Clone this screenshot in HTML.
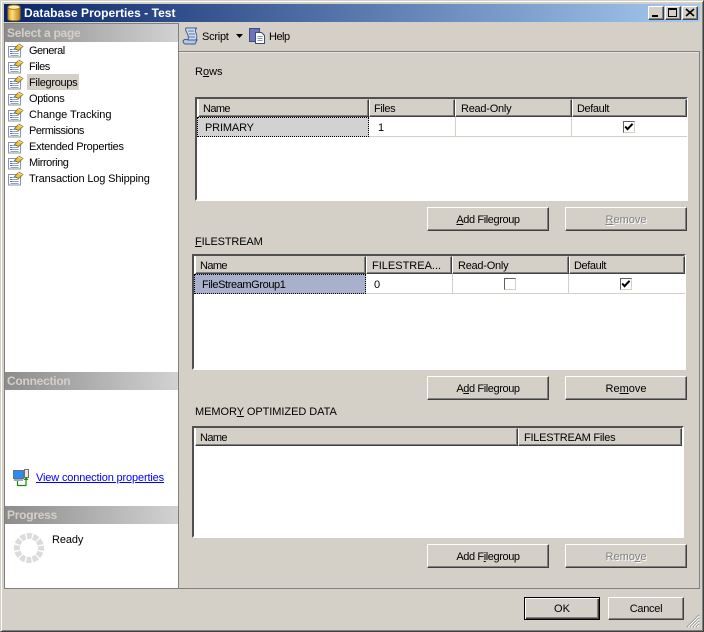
<!DOCTYPE html>
<html><head><meta charset="utf-8"><style>
html,body{margin:0;padding:0}
body{width:704px;height:632px;overflow:hidden;background:#d4d0c8;position:relative;font:11px/16px "Liberation Sans",sans-serif;color:#000}
.a,.b,.h,.t,.hd{position:absolute;box-sizing:border-box}
.t{white-space:nowrap;letter-spacing:-.15px}
.b{background:#d4d0c8;border:1px solid;border-color:#fff #404040 #404040 #fff;box-shadow:inset -1px -1px #808080;text-align:center;line-height:24px;white-space:nowrap;letter-spacing:-.4px}
.b.d{color:#808080;text-shadow:1px 1px #fff;letter-spacing:0}
.h{background:#d4d0c8;border:1px solid;border-color:#d4d0c8 #404040 #404040 #fff;box-shadow:inset -1px -1px #808080;height:18px;line-height:18px;padding-left:4px;white-space:nowrap;overflow:hidden}
.g{position:absolute;box-sizing:border-box;background:#fff;border:2px solid;border-color:#505050 #fff #fff #505050}
.hd{left:7px;width:172px;height:18px;background:linear-gradient(90deg,#8c8c8c,#d2d2d2);color:#d4d0c8;font-weight:bold;font-size:12px;line-height:19px;padding-left:2px;letter-spacing:-.25px}
u{text-decoration:underline}
.ck{position:absolute;box-sizing:border-box;width:12px;height:12px;background:#fff;border:1px solid;border-color:#606060 #d4d0c8 #d4d0c8 #606060}
svg{position:absolute;overflow:visible}
</style></head><body>
<svg width="0" height="0" style="position:absolute"><defs>
<symbol id="pg" viewBox="0 0 16 15"><rect x=".5" y="3.5" width="12" height="10.5" fill="#fff" stroke="#8a94a8"/><path d="M2.500 6.500h8M2.500 8.500h8M2.500 10.500h8M2.500 12.500h8" stroke="#8fa0d0"/><path d="M2 6.500h2M2 8.500h2M2 10.500h2" stroke="#5a6ab0"/><path d="M6.500 5.500L11 1l4 2.500-4.500 4z" fill="#f2c030" stroke="#6a6a40" stroke-width=".8"/><path d="M10 1.500l4.500 2.500" stroke="#fff0a0"/></symbol>
<symbol id="ckm" viewBox="0 0 10 10"><path d="M1.200 4.500l2.300 2.600L8.600 1.800" fill="none" stroke="#000" stroke-width="2"/></symbol>
</defs></svg>

<!-- window frame -->
<div class="a" style="left:0;top:0;width:704px;height:632px;border:1px solid;border-color:#d4d0c8 #404040 #404040 #d4d0c8;box-shadow:inset 1px 1px #fff,inset -1px -1px #808080"></div>
<!-- title -->
<div class="a" style="left:4px;top:4px;width:696px;height:18px;background:linear-gradient(90deg,#0a246a,#a6caf0)"></div>
<svg style="left:7px;top:4px" width="14" height="18" viewBox="0 0 14 18"><defs><linearGradient id="cy"><stop offset="0" stop-color="#d89a20"/><stop offset=".35" stop-color="#ffe080"/><stop offset="1" stop-color="#c08010"/></linearGradient></defs><path d="M1 3.500v11.500c0 2.300 12 2.300 12 0V3.500z" fill="url(#cy)" stroke="#a07820"/><ellipse cx="7" cy="3.200" rx="6" ry="2.200" fill="#fff0b0" stroke="#a07820"/></svg>
<div class="t" style="left:24px;top:6px;color:#fff;font-weight:bold;letter-spacing:.04px;font-size:12px;line-height:14px">Database Properties - Test</div>
<div class="b" style="left:648px;top:6px;width:16px;height:14px"></div><div class="a" style="left:652px;top:15px;width:6px;height:2px;background:#000"></div>
<div class="b" style="left:665px;top:6px;width:16px;height:14px"></div><div class="a" style="left:668px;top:8px;width:9px;height:9px;border:1px solid #000;border-top-width:2px;box-sizing:border-box"></div>
<div class="b" style="left:682px;top:6px;width:16px;height:14px"></div><svg style="left:686px;top:9px" width="8" height="7"><path d="M0 0l8 7M8 0L0 7" stroke="#000" stroke-width="1.600"/></svg>

<!-- left pane -->
<div class="a" style="left:4px;top:23px;width:175px;height:566px;background:#fff;border:1px solid #808080;box-sizing:border-box"></div>
<div class="hd" style="left:5px;top:24px;width:173px">Select a page</div>
<div class="a" style="left:27px;top:74px;width:52px;height:16px;background:#d4d0c8"></div>
<svg style="left:8px;top:43px" width="16" height="15"><use href="#pg"/></svg><div class="t" style="left:29px;top:43px;letter-spacing:-.5px">General</div>
<svg style="left:8px;top:59px" width="16" height="15"><use href="#pg"/></svg><div class="t" style="left:29px;top:59px;letter-spacing:-.5px">Files</div>
<svg style="left:8px;top:75px" width="16" height="15"><use href="#pg"/></svg><div class="t" style="left:29px;top:75px;letter-spacing:-.3px">Filegroups</div>
<svg style="left:8px;top:91px" width="16" height="15"><use href="#pg"/></svg><div class="t" style="left:29px;top:91px;letter-spacing:-.35px">Options</div>
<svg style="left:8px;top:107px" width="16" height="15"><use href="#pg"/></svg><div class="t" style="left:29px;top:107px;letter-spacing:-.05px">Change Tracking</div>
<svg style="left:8px;top:123px" width="16" height="15"><use href="#pg"/></svg><div class="t" style="left:29px;top:123px;letter-spacing:-.45px">Permissions</div>
<svg style="left:8px;top:139px" width="16" height="15"><use href="#pg"/></svg><div class="t" style="left:29px;top:139px;letter-spacing:-.26px">Extended Properties</div>
<svg style="left:8px;top:155px" width="16" height="15"><use href="#pg"/></svg><div class="t" style="left:29px;top:155px;letter-spacing:-.44px">Mirroring</div>
<svg style="left:8px;top:171px" width="16" height="15"><use href="#pg"/></svg><div class="t" style="left:29px;top:171px">Transaction Log Shipping</div>

<div class="hd" style="left:5px;top:372px;width:173px">Connection</div>
<svg style="left:13px;top:469px" width="17" height="17" viewBox="0 0 17 17"><rect x=".5" y="1.500" width="10" height="8" fill="#2a8cf0" stroke="#607090"/><rect x="1" y="10" width="9" height="2" fill="#a0a8b8"/><rect x="11.500" y=".5" width="4" height="8" fill="#e8e8e8" stroke="#707070"/><path d="M4.500 12v4.500h8.500V9" fill="none" stroke="#1c8a10" stroke-width="1.200"/><path d="M10.500 11l2.500-3 2.500 3z" fill="#1c8a10"/></svg>
<div class="t" style="left:36px;top:470px;color:#0000ff;text-decoration:underline">View connection properties</div>
<div class="hd" style="left:5px;top:506px;width:173px">Progress</div>
<svg style="left:14px;top:533px" width="30" height="30" viewBox="0 0 30 30"><circle cx="15" cy="15" r="12" fill="none" stroke="#dcdcdc" stroke-width="6" stroke-dasharray="5 1.283" stroke-dashoffset="2.500"/></svg>
<div class="t" style="left:52px;top:532px;letter-spacing:-.1px">Ready</div>

<!-- toolbar -->
<svg style="left:182px;top:27px" width="18" height="18" viewBox="0 0 18 18"><path d="M4 1h11c-2 1-2 3-1 5s1 5 0 7H6c1-3 0-5-1-7S3 3 4 1z" fill="#d0dcf0" stroke="#405a90"/><path d="M1 14c1-2 3-2 5-1h9c-1 1-1 3-2 4H3c-1 0-2-2-2-3z" fill="#b8c8e4" stroke="#405a90"/><path d="M6 4h6M7 7h6M7 10h6" stroke="#6078a8"/></svg>
<div class="t" style="left:202px;top:29px;letter-spacing:-.25px">Script</div>
<svg style="left:236px;top:34px" width="7" height="4"><path d="M0 0h7L3.500 4z" fill="#000"/></svg>
<svg style="left:249px;top:27px" width="17" height="18" viewBox="0 0 17 18"><rect x=".5" y="1.500" width="10" height="13" fill="#6c74b8" stroke="#40487c"/><path d="M6.500 5.500h6l3 3v8h-9z" fill="#fff" stroke="#40487c"/><path d="M8.500 9.500h5M8.500 11.500h5M8.500 13.500h5" stroke="#8090b0"/></svg>
<div class="t" style="left:269px;top:29px;letter-spacing:-.5px">Help</div>

<!-- content frame -->
<div class="a" style="left:179px;top:51px;width:521px;height:538px;border-top:1px solid #808080;border-right:1px solid #808080;border-bottom:1px solid #808080;box-shadow:inset 0 1px #e8e6e0;box-sizing:border-box"></div>

<div class="t" style="left:195px;top:64px;letter-spacing:0">R<u>o</u>ws</div>
<!-- grid 1 -->
<div class="g" style="left:195px;top:97px;width:493px;height:104px"></div>
<div class="h" style="left:198px;top:99px;width:171px;letter-spacing:-.6px">Name</div>
<div class="h" style="left:369px;top:99px;width:86px;letter-spacing:-.4px">Files</div>
<div class="h" style="left:455px;top:99px;width:117px;letter-spacing:-.25px;padding-left:5px">Read-Only</div>
<div class="h" style="left:572px;top:99px;width:115px;letter-spacing:-.4px">Default</div>
<div class="a" style="left:197px;top:117px;width:172px;height:20px;background:#d2d2d2;outline:1px dotted #000;outline-offset:-1px"></div>
<div class="t" style="left:205px;top:120px">PRIMARY</div>
<div class="a" style="left:369px;top:117px;width:318px;height:20px;border-bottom:1px solid #d4d0c8;box-sizing:border-box"></div>
<div class="a" style="left:455px;top:117px;width:1px;height:20px;background:#d4d0c8"></div>
<div class="a" style="left:571px;top:117px;width:1px;height:20px;background:#d4d0c8"></div>
<div class="t" style="left:378px;top:120px">1</div>
<div class="ck" style="left:623px;top:121px"></div><svg style="left:624px;top:122px" width="10" height="10"><use href="#ckm"/></svg>
<div class="b" style="left:427px;top:207px;width:122px;height:24px"><u>A</u>dd Filegroup</div>
<div class="b d" style="left:565px;top:207px;width:122px;height:24px"><u>R</u>emove</div>

<div class="t" style="left:195px;top:234px"><u>F</u>ILESTREAM</div>
<!-- grid 2 -->
<div class="g" style="left:192px;top:254px;width:494px;height:116px"></div>
<div class="h" style="left:195px;top:256px;width:171px;letter-spacing:-.6px">Name</div>
<div class="h" style="left:366px;top:256px;width:86px;padding-left:5px">FILESTREA...</div>
<div class="h" style="left:452px;top:256px;width:117px;letter-spacing:-.25px;padding-left:5px">Read-Only</div>
<div class="h" style="left:569px;top:256px;width:116px;letter-spacing:-.4px">Default</div>
<div class="a" style="left:194px;top:274px;width:172px;height:20px;background:#a9b0cc;outline:1px dotted #000;outline-offset:-1px"></div>
<div class="t" style="left:202px;top:277px;letter-spacing:-.4px">FileStreamGroup1</div>
<div class="a" style="left:366px;top:274px;width:319px;height:20px;border-bottom:1px solid #d4d0c8;box-sizing:border-box"></div>
<div class="a" style="left:452px;top:274px;width:1px;height:20px;background:#d4d0c8"></div>
<div class="a" style="left:568px;top:274px;width:1px;height:20px;background:#d4d0c8"></div>
<div class="t" style="left:374px;top:277px">0</div>
<div class="ck" style="left:504px;top:278px"></div>
<div class="ck" style="left:620px;top:278px"></div><svg style="left:621px;top:279px" width="10" height="10"><use href="#ckm"/></svg>
<div class="b" style="left:427px;top:376px;width:122px;height:24px">A<u>d</u>d Filegroup</div>
<div class="b" style="left:565px;top:376px;width:122px;height:24px;letter-spacing:0">Re<u>m</u>ove</div>

<div class="t" style="left:195px;top:404px;letter-spacing:-.05px">MEMOR<u>Y</u> OPTIMIZED DATA</div>
<!-- grid 3 -->
<div class="g" style="left:192px;top:426px;width:492px;height:112px"></div>
<div class="h" style="left:195px;top:428px;width:323px;letter-spacing:-.6px">Name</div>
<div class="h" style="left:518px;top:428px;width:164px;padding-left:5px;letter-spacing:-.25px">FILESTREAM Files</div>
<div class="b" style="left:427px;top:544px;width:122px;height:24px">Add F<u>i</u>legroup</div>
<div class="b d" style="left:565px;top:544px;width:122px;height:24px">Remo<u>v</u>e</div>

<!-- footer -->
<div class="b" style="left:524px;top:597px;width:76px;height:23px;line-height:22px;letter-spacing:0;border-color:#000;box-shadow:inset 1px 1px #fff,inset -1px -1px #404040,inset -2px -2px #808080">OK</div>
<div class="b" style="left:608px;top:597px;width:76px;height:23px;line-height:22px;letter-spacing:-.3px">Cancel</div>
<svg style="left:686px;top:614px" width="14" height="14"><path d="M13 1L1 13M13 4L4 13M13 7L7 13M13 10L10 13" stroke="#808080"/><path d="M13 2L2 13M13 5L5 13M13 8L8 13M13 11L11 13" stroke="#fff"/></svg>
</body></html>
